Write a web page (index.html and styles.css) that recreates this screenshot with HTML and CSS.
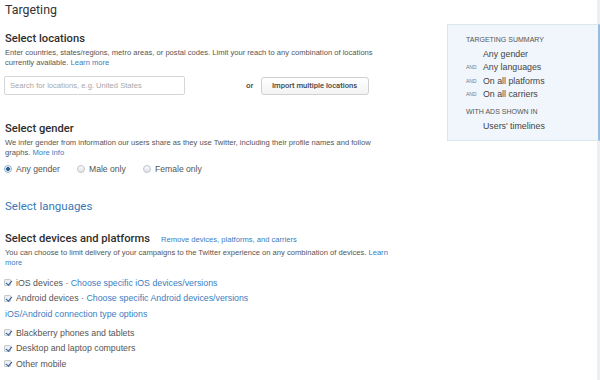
FILE: index.html
```html
<!DOCTYPE html>
<html>
<head>
<meta charset="utf-8">
<link rel="stylesheet" href="styles.css">
</head>
<body>
<div class="page">
  <main class="main">
    <h1 class="title">Targeting</h1>

    <section class="sec sec-loc">
      <h2 class="h2">Select locations</h2>
      <p class="desc">Enter countries, states/regions, metro areas, or postal codes. Limit your reach to any combination of locations currently available. <a class="link">Learn more</a></p>
      <div class="loc-row">
        <div class="input">Search for locations, e.g. United States</div>
        <span class="or">or</span>
        <div class="btn">Import multiple locations</div>
      </div>
    </section>

    <section class="sec sec-gender">
      <h2 class="h2">Select gender</h2>
      <p class="desc">We infer gender from information our users share as they use Twitter, including their profile names and follow graphs. <a class="link">More info</a></p>
      <div class="radios">
        <label class="radio-item"><span class="radio on"></span>Any gender</label>
        <label class="radio-item"><span class="radio"></span>Male only</label>
        <label class="radio-item"><span class="radio"></span>Female only</label>
      </div>
    </section>

    <h2 class="h2 lang">Select languages</h2>

    <section class="sec sec-dev">
      <div class="h2-row"><h2 class="h2">Select devices and platforms</h2><a class="link small-link">Remove devices, platforms, and carriers</a></div>
      <p class="desc desc-dev">You can choose to limit delivery of your campaigns to the Twitter experience on any combination of devices. <a class="link">Learn more</a></p>
      <div class="checks">
        <div class="check-item"><span class="cb"></span><span>iOS devices · <a class="link">Choose specific iOS devices/versions</a></span></div>
        <div class="check-item"><span class="cb"></span><span>Android devices · <a class="link">Choose specific Android devices/versions</a></span></div>
        <div class="conn"><a class="link">iOS/Android connection type options</a></div>
        <div class="check-item"><span class="cb"></span><span>Blackberry phones and tablets</span></div>
        <div class="check-item"><span class="cb"></span><span>Desktop and laptop computers</span></div>
        <div class="check-item"><span class="cb"></span><span>Other mobile</span></div>
      </div>
    </section>
  </main>

  <aside class="side">
    <div class="summary">
      <div class="sum-head">TARGETING SUMMARY</div>
      <div class="sum-row"><span class="and"></span>Any gender</div>
      <div class="sum-row"><span class="and">AND</span>Any languages</div>
      <div class="sum-row"><span class="and">AND</span>On all platforms</div>
      <div class="sum-row"><span class="and">AND</span>On all carriers</div>
      <div class="sum-head sum-head2">WITH ADS SHOWN IN</div>
      <div class="sum-row"><span class="and"></span>Users' timelines</div>
    </div>
  </aside>
</div>
</body>
</html>
```

FILE: styles.css
```css
* { box-sizing: border-box; margin: 0; padding: 0; }
html, body { width: 600px; height: 380px; overflow: hidden; background: #fff; }
body { font-family: "Liberation Sans", Arial, sans-serif; color: #555; }

.page { display: flex; height: 380px; }
.main { width: 447px; padding-left: 5px; }
.side { flex: 1; border-right: 3px solid #eceef0; padding-top: 24px; }

.title { font-family: Roboto, "Liberation Sans", sans-serif; font-weight: 400; font-size: 12.4px; color: #333; line-height: 16px; padding-top: 2px; }

.h2 { font-family: Roboto, "Liberation Sans", sans-serif; font-weight: 500; font-size: 11.2px; color: #2e2e2e; line-height: 14px; }
.desc { font-size: 7.6px; line-height: 9.5px; color: #555; width: 376px; margin-top: 2px; }
.desc-dev { width: 396px; }
.link { color: #3b7dc0; text-decoration: none; }

.sec-loc { margin-top: 14px; }
.loc-row { display: flex; align-items: center; margin-top: 9px; margin-left: -1px; }
.input { width: 181px; height: 19px; border: 1px solid #d6d6d6; border-radius: 2px; font-size: 7.6px; color: #a8a8a8; padding-left: 5px; line-height: 17px; }
.or { font-size: 7.5px; font-weight: 700; color: #555; margin-left: 61px; }
.btn { margin-left: 7px; height: 18px; width: 108px; border: 1px solid #d0d0d0; border-radius: 3px; background: linear-gradient(#fff, #f3f3f3); font-family: Roboto, sans-serif; font-weight: 500; font-size: 7.6px; color: #444; display: flex; align-items: center; justify-content: center; }

.sec-gender { margin-top: 27px; }
.radios { display: flex; margin-top: 7px; }
.radio-item { display: flex; align-items: center; font-size: 8.6px; color: #555; }
.radio-item:nth-child(1) { width: 73px; }
.radio-item:nth-child(2) { width: 66px; }
.radio { width: 8px; height: 8px; border-radius: 50%; border: 1px solid #bfc5cb; background: linear-gradient(#fafbfc, #dfe3e7); margin-right: 4px; margin-left: -1px; }
.radio.on { border-color: #9fb5cb; background: radial-gradient(circle, #2f5f93 0 1.6px, #dce9f5 2.2px); }

.lang { color: #3a78b5; font-weight: 400; margin-top: 25px; font-size: 11.5px; }

.sec-dev { margin-top: 19px; }
.h2-row { display: flex; align-items: baseline; }
.small-link { font-size: 7.6px; margin-left: 11px; }
.checks { margin-top: 8px; }
.check-item { display: flex; align-items: center; font-size: 8.8px; color: #555; height: 15.5px; white-space: pre; }
.conn { font-size: 8.8px; height: 16px; line-height: 16px; margin-bottom: 3px; }
.cb { width: 7px; height: 7px; border: 1px solid #c4c9ce; border-radius: 1px; background: #eef0f2; margin-right: 5px; margin-left: -1px; position: relative; flex: none; }
.cb::after { content: ""; position: absolute; left: 1.5px; top: -1px; width: 2.5px; height: 5px; border-right: 1.6px solid #2f5f96; border-bottom: 1.6px solid #2f5f96; transform: rotate(40deg); }

.summary { background: #f0f6fb; border: 1px solid #dce6ee; border-right: 2px solid #93bde3; margin-right: -3px; height: 117px; padding: 10px 0 0 18px; }
.sum-head { font-size: 7px; color: #555; line-height: 9px; margin-bottom: 4px; }
.sum-head2 { margin-top: 6px; }
.sum-row { display: flex; align-items: center; font-size: 8.8px; color: #444; line-height: 13.3px; }
.and { width: 17px; font-size: 5px; color: #777; }
```
